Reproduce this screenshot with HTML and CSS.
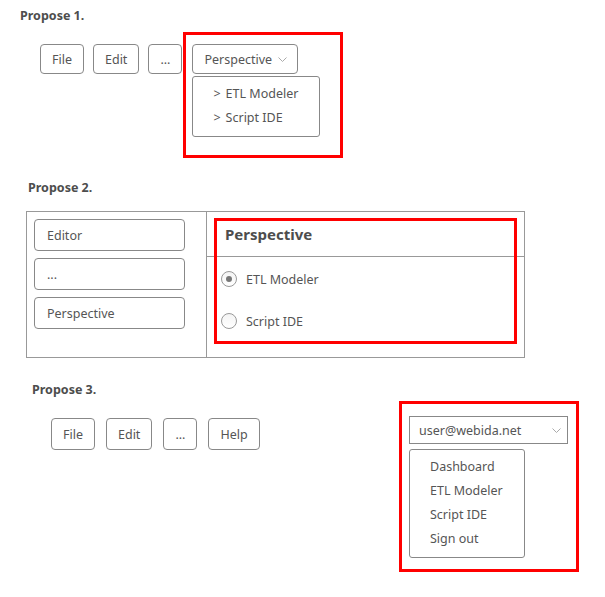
FILE: index.html
```html
<!DOCTYPE html>
<html>
<head>
<meta charset="utf-8">
<link rel="stylesheet" href="styles.css">
</head>
<body>
<section class="proposal p1">
  <h2 class="title">Propose 1.</h2>
  <div class="row1">
    <div class="btn">File</div>
    <div class="btn">Edit</div>
    <div class="btn">...</div>
    <div class="hl hl1">
      <div class="btn btn-drop">Perspective
        <svg class="chev" width="9" height="5" viewBox="0 0 9 5"><path d="M0.5 0.5 L4.5 4.5 L8.5 0.5" fill="none" stroke="#aaa" stroke-width="1"/></svg>
      </div>
      <ul class="menu menu1">
        <li><span class="arrow">&gt;</span>ETL Modeler</li>
        <li><span class="arrow">&gt;</span>Script IDE</li>
      </ul>
    </div>
  </div>
</section>

<section class="proposal p2">
  <h2 class="title">Propose 2.</h2>
  <div class="panel">
    <div class="side">
      <div class="side-btn">Editor</div>
      <div class="side-btn">...</div>
      <div class="side-btn">Perspective</div>
    </div>
    <div class="detail">
      <div class="detail-head">Perspective</div>
      <div class="radios">
        <div class="radio-row"><span class="radio checked"></span>ETL Modeler</div>
        <div class="radio-row"><span class="radio"></span>Script IDE</div>
      </div>
      <div class="hl hl2"></div>
    </div>
  </div>
</section>

<section class="proposal p3">
  <h2 class="title">Propose 3.</h2>
  <div class="row3">
    <div class="btns3">
      <div class="btn btn-lg">File</div>
      <div class="btn btn-lg">Edit</div>
      <div class="btn btn-lg">...</div>
      <div class="btn btn-lg">Help</div>
    </div>
    <div class="hl hl3">
      <div class="select">user@webida.net
        <svg class="chev" width="9" height="5" viewBox="0 0 9 5"><path d="M0.5 0.5 L4.5 4.5 L8.5 0.5" fill="none" stroke="#aaa" stroke-width="1"/></svg>
      </div>
      <ul class="menu menu3">
        <li>Dashboard</li>
        <li>ETL Modeler</li>
        <li>Script IDE</li>
        <li>Sign out</li>
      </ul>
    </div>
  </div>
</section>
</body>
</html>
```

FILE: styles.css
```css
* { box-sizing: border-box; }

body {
  margin: 0;
  font-family: "Noto Sans", "Open Sans", sans-serif;
  font-size: 12.5px;
  color: #555;
  background: #fff;
}

.title {
  margin: 0;
  font-size: 12.5px;
  font-weight: 700;
  line-height: 16px;
  color: #4d4d4d;
}

.btn {
  height: 30px;
  border: 1px solid #888;
  border-radius: 4px;
  padding: 0 11px;
  display: flex;
  align-items: center;
  white-space: nowrap;
}

.hl { border: 3px solid #f00; }

.menu {
  list-style: none;
  margin: 0;
  border: 1px solid #888;
  border-radius: 3px;
  line-height: 24px;
}

/* Proposal 1 */
.p1 { padding-top: 8px; }
.p1 .title { padding-left: 20px; }

.row1 {
  display: flex;
  align-items: flex-start;
  gap: 9px;
  padding-left: 40px;
  margin-top: 8px;
}

.row1 > .btn { margin-top: 12px; }

.hl1 {
  margin-left: -8px;
  padding: 9px 20px 18px 6px;
  display: flex;
  flex-direction: column;
  align-items: flex-start;
}

.btn-drop {
  padding: 0 10px 0 11px;
  gap: 6px;
}

.menu1 {
  width: 128px;
  margin-top: 2px;
  padding: 5px 0 6px 20px;
}

.arrow { margin-right: 5px; }

/* Proposal 2 */
.p2 { margin-top: 22px; }
.p2 .title { padding-left: 28px; }

.panel {
  display: grid;
  grid-template-columns: 180px 1fr;
  width: 499px;
  height: 147px;
  margin: 15px 0 0 26px;
  border: 1px solid #999;
}

.side {
  border-right: 1px solid #999;
  padding: 7px 0 0 7px;
  display: flex;
  flex-direction: column;
  gap: 7px;
}

.side-btn {
  width: 151px;
  height: 32px;
  border: 1px solid #888;
  border-radius: 4px;
  padding-left: 12px;
  display: flex;
  align-items: center;
}

.detail { position: relative; }

.detail-head {
  height: 45px;
  border-bottom: 1px solid #999;
  padding-left: 18px;
  font-size: 15px;
  font-weight: 700;
  color: #4d4d4d;
  display: flex;
  align-items: center;
}

.radios { padding-top: 1px; }

.radio-row {
  height: 42px;
  display: flex;
  align-items: center;
  gap: 9px;
  padding-left: 14px;
}

.radio {
  width: 16px;
  height: 16px;
  border-radius: 50%;
  border: 1px solid #999;
  background: linear-gradient(#f4f4f4, #fff);
  display: flex;
  align-items: center;
  justify-content: center;
}

.radio.checked::after {
  content: "";
  width: 6px;
  height: 6px;
  border-radius: 50%;
  background: #777;
}

.hl2 {
  position: absolute;
  left: 7px;
  top: 6px;
  width: 303px;
  height: 126px;
}

/* Proposal 3 */
.p3 { margin-top: 24px; }
.p3 .title { padding-left: 32px; }

.row3 {
  display: flex;
  align-items: flex-start;
  margin-top: 3px;
  padding: 0 26px 0 51px;
}

.btns3 {
  display: flex;
  gap: 11px;
  margin-top: 17px;
}

.btn-lg { height: 32px; }

.hl3 {
  margin-left: auto;
  width: 180px;
  padding: 12px 8px 11px 7px;
}

.select {
  height: 28px;
  border: 1px solid #888;
  padding: 0 6px 0 9px;
  display: flex;
  align-items: center;
  justify-content: space-between;
}

.menu3 {
  width: 116px;
  margin-top: 5px;
  padding: 5px 0 6px 20px;
}
```
